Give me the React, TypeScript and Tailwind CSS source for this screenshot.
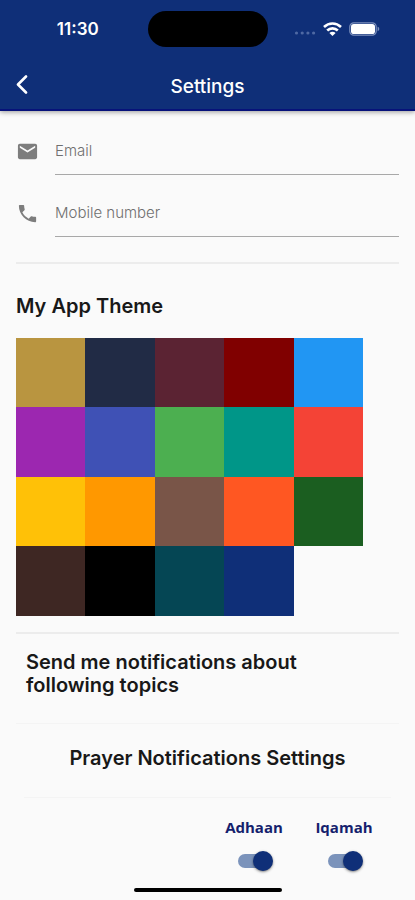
import { useState } from "react";
import { MdEmail, MdPhone } from "react-icons/md";

const themeColors = [
  { name: "Gold", bg: "bg-[#b99540]" },
  { name: "Navy", bg: "bg-[#212b45]" },
  { name: "Wine", bg: "bg-[#5b2333]" },
  { name: "Maroon", bg: "bg-[#800000]" },
  { name: "Blue", bg: "bg-[#2196f3]" },
  { name: "Purple", bg: "bg-[#9c27b0]" },
  { name: "Indigo", bg: "bg-[#3f51b5]" },
  { name: "Green", bg: "bg-[#4caf50]" },
  { name: "Teal", bg: "bg-[#009688]" },
  { name: "Red", bg: "bg-[#f44336]" },
  { name: "Amber", bg: "bg-[#ffc107]" },
  { name: "Orange", bg: "bg-[#ff9800]" },
  { name: "Brown", bg: "bg-[#795548]" },
  { name: "Deep orange", bg: "bg-[#ff5722]" },
  { name: "Dark green", bg: "bg-[#1b5e20]" },
  { name: "Dark brown", bg: "bg-[#3e2723]" },
  { name: "Black", bg: "bg-black" },
  { name: "Petrol", bg: "bg-[#054654]" },
  { name: "Royal blue", bg: "bg-[#0f2f78]" },
];

function StatusBar() {
  return (
    <div className="grid grid-cols-[1fr_120px_1fr] items-center pt-[11px]">
      <span className="pl-2 text-center text-[17px] leading-6 font-semibold">11:30</span>
      <div className="h-9 rounded-full bg-black" />
      <div className="flex items-center justify-center gap-[7px] pr-2">
        <svg className="h-3 w-[22px]" viewBox="0 0 22 12" fill="#4f69a3">
          <circle cx="2.5" cy="10" r="1.6" />
          <circle cx="8.2" cy="10" r="1.6" />
          <circle cx="13.9" cy="10" r="1.6" />
          <circle cx="19.6" cy="10" r="1.6" />
        </svg>
        <svg className="h-[14px] w-[19px]" viewBox="0 0 19 14" fill="none" stroke="white" strokeWidth="2.6">
          <path d="M1 5C5.8 0.4 13.2 0.4 18 5" />
          <path d="M4.2 8.5C7.2 5.6 11.8 5.6 14.8 8.5" />
          <path d="M9.5 14L6.4 10.9C8.2 9.3 10.8 9.3 12.6 10.9Z" fill="white" stroke="none" />
        </svg>
        <svg className="h-[14px] w-[31px]" viewBox="0 0 31 14" fill="none">
          <rect x="0.8" y="0.8" width="26.4" height="12.4" rx="4" stroke="#7d90bc" strokeWidth="1.2" />
          <rect x="2" y="2" width="24" height="10" rx="2.8" fill="white" />
          <path d="M28.6 4.8C30.8 5.4 30.8 8.6 28.6 9.2Z" fill="#7d90bc" />
        </svg>
      </div>
    </div>
  );
}

function Field({ id, label, type, icon }: { id: string; label: string; type: string; icon: React.ReactNode }) {
  return (
    <div className="flex items-center gap-4">
      <label htmlFor={id} aria-label={label} className="text-[#7d7d7d]">
        {icon}
      </label>
      <input
        id={id}
        type={type}
        placeholder={label}
        className="h-12 min-w-0 flex-1 border-b border-[#a8a8a8] bg-transparent text-[15px] font-light text-[#333] outline-none placeholder:text-[#6f6f6f]"
      />
    </div>
  );
}

function Toggle({ id, label }: { id: string; label: string }) {
  const [on, setOn] = useState(true);

  return (
    <div className="flex w-[90px] flex-col items-center gap-[17px]">
      <label htmlFor={id} className="font-['Open_Sans','Noto_Sans',sans-serif] text-[15px] leading-5 font-bold text-[#151f6d]">
        {label}
      </label>
      <input
        id={id}
        type="checkbox"
        role="switch"
        checked={on}
        onChange={() => setOn(!on)}
        className="flex h-[14px] w-8 appearance-none items-center rounded-full bg-gray-300 before:size-5 before:shrink-0 before:rounded-full before:bg-gray-50 before:shadow-sm before:shadow-black/40 checked:justify-end checked:bg-[#7b93bb] checked:before:-mr-[3px] checked:before:bg-[#0f2f78]"
      />
    </div>
  );
}

export default function App() {
  return (
    <div className="min-h-screen bg-[#fafafa] font-['Inter','Liberation_Sans',sans-serif] text-[#181818]">
      <header className="border-b-2 border-[#07127a] bg-[#0f2f78] text-white shadow-[0_1px_5px_rgba(0,0,0,0.4)]">
        <StatusBar />
        <div className="grid grid-cols-[48px_1fr_48px] items-center pt-5 pb-[6px]">
          <button type="button" aria-label="Back" className="flex h-9 items-center pl-4">
            <svg className="h-5 w-3" viewBox="0 0 12 20" fill="none" stroke="white" strokeWidth="2.6" strokeLinecap="round" strokeLinejoin="round">
              <path d="M10 1.5L2 9.5L10 17.5" />
            </svg>
          </button>
          <h1 className="pt-1 text-center text-[19px] leading-6 font-medium">Settings</h1>
        </div>
      </header>

      <main className="px-4 pt-4 pb-7">
        <form className="flex flex-col gap-[14px]">
          <Field id="email" label="Email" type="email" icon={<MdEmail size={23} />} />
          <Field id="mobile" label="Mobile number" type="tel" icon={<MdPhone size={23} />} />
        </form>

        <section className="mt-[25px] border-t-2 border-[#ececec] pt-[30px]">
          <h2 className="text-[20px] leading-6 font-semibold">My App Theme</h2>
          <div className="mt-5 mr-9 grid grid-cols-5">
            {themeColors.map((color) => (
              <button key={color.name} type="button" aria-label={color.name} className={`aspect-square ${color.bg}`} />
            ))}
          </div>
        </section>

        <section className="mt-4 border-t-2 border-[#ececec]">
          <h2 className="max-w-[310px] px-[10px] pt-[17px] pb-[26px] text-[20px] leading-[23px] font-semibold">
            Send me notifications about following topics
          </h2>
          <div className="border-t border-[#f4f4f4] pt-[22px]">
            <h3 className="text-center text-[20px] leading-6 font-semibold">Prayer Notifications Settings</h3>
            <div className="mx-2 mt-[27px] flex justify-end border-t border-[#f4f4f4] pt-[19px] pr-[2px]">
              <Toggle id="adhaan" label="Adhaan" />
              <Toggle id="iqamah" label="Iqamah" />
            </div>
          </div>
        </section>
      </main>

      {/* home indicator */}
      <div className="fixed bottom-2 left-1/2 h-1 w-[148px] -translate-x-1/2 rounded-full bg-black" />
    </div>
  );
}
